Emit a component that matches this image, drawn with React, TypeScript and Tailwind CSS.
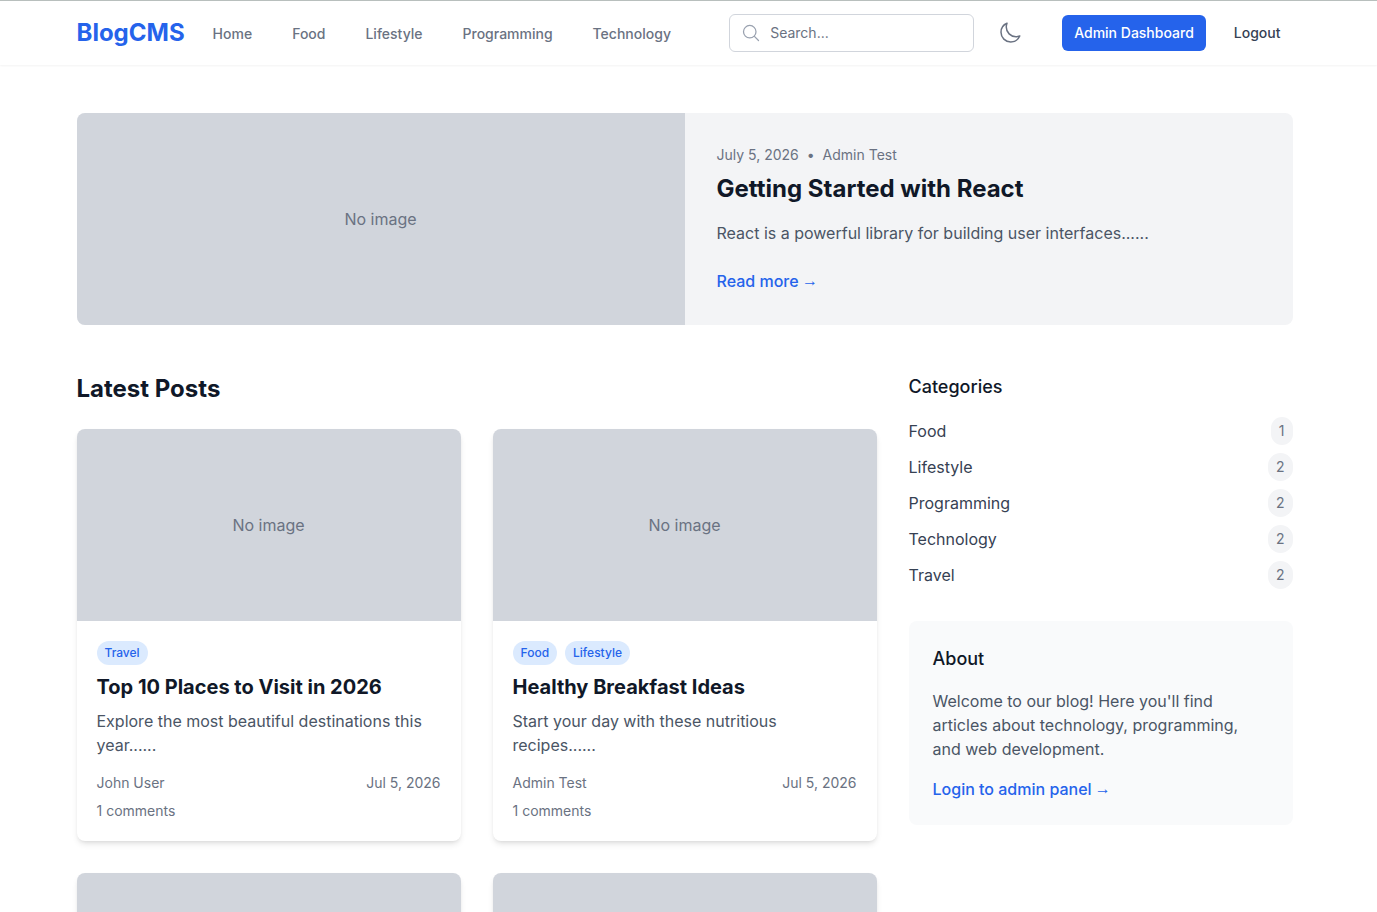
import { HiOutlineMagnifyingGlass, HiOutlineMoon } from 'react-icons/hi2'

interface Post {
  id: number
  title: string
  excerpt: string
  author: string
  date: string
  comments: number
  categories: string[]
}

const NAV_LINKS = ['Home', 'Food', 'Lifestyle', 'Programming', 'Technology']

const CATEGORIES = [
  { name: 'Food', count: 1 },
  { name: 'Lifestyle', count: 2 },
  { name: 'Programming', count: 2 },
  { name: 'Technology', count: 2 },
  { name: 'Travel', count: 2 },
]

const POSTS: Post[] = [
  {
    id: 1,
    title: 'Top 10 Places to Visit in 2026',
    excerpt: 'Explore the most beautiful destinations this year...',
    author: 'John User',
    date: 'Jul 5, 2026',
    comments: 1,
    categories: ['Travel'],
  },
  {
    id: 2,
    title: 'Healthy Breakfast Ideas',
    excerpt: 'Start your day with these nutritious recipes...',
    author: 'Admin Test',
    date: 'Jul 5, 2026',
    comments: 1,
    categories: ['Food', 'Lifestyle'],
  },
]

function Arrow() {
  return <span className="-ml-px align-[1px] font-['Liberation_Sans',sans-serif] text-base font-normal leading-none">→</span>
}

function Header() {
  return (
    <header className="relative border-t border-[#b8bfbd] bg-white pr-2 shadow-[0_1px_2px_0_rgb(0_0_0/0.05)]">
      <div className="mx-auto flex h-16 max-w-7xl items-center justify-between px-8">
        <div className="flex h-full items-center">
          <a href="#" className="text-2xl font-bold text-[#2563eb]">BlogCMS</a>
          <nav className="ml-6 flex h-full gap-8">
            {NAV_LINKS.map((link) => (
              <a
                key={link}
                href="#"
                className="inline-flex items-center border-b-2 border-transparent px-1 pt-1 text-sm font-medium text-gray-500 hover:text-gray-700"
              >
                {link}
              </a>
            ))}
          </nav>
        </div>

        <div className="flex items-center">
          <div className="relative w-[245px]">
            <HiOutlineMagnifyingGlass className="absolute left-3 top-[9px] h-5 w-5 text-gray-400" />
            <input
              type="text"
              placeholder="Search..."
              className="block w-full rounded-md border border-gray-300 bg-white py-2 pl-10 pr-3 text-sm leading-5 placeholder:text-gray-500"
            />
          </div>
          <button className="ml-4 rounded-full p-2 text-gray-500">
            <HiOutlineMoon className="h-6 w-6" />
          </button>
          <a href="#" className="ml-8 rounded-md bg-[#2563eb] px-3 py-2 text-sm font-medium text-white">
            Admin Dashboard
          </a>
          <button className="ml-4 px-3 py-2 text-sm font-medium text-gray-700">Logout</button>
        </div>
      </div>
    </header>
  )
}

function Hero() {
  return (
    <section className="mb-12 grid grid-cols-2 overflow-hidden rounded-lg bg-gray-100">
      <div className="flex items-center justify-center bg-gray-300">
        <span className="text-gray-500">No image</span>
      </div>
      <div className="p-8">
        <div className="mb-2 flex items-center text-sm text-gray-500">
          <span>July 5, 2026</span>
          <span className="mx-2">•</span>
          <span>Admin Test</span>
        </div>
        <h2 className="mb-4 text-2xl font-bold text-gray-900">Getting Started with React</h2>
        <p className="mb-6 text-gray-600">React is a powerful library for building user interfaces......</p>
        <a href="#" className="block font-medium text-[#2563eb]">Read more <Arrow /></a>
      </div>
    </section>
  )
}

function PostCard({ post }: { post: Post }) {
  return (
    <article className="overflow-hidden rounded-lg bg-white shadow-md">
      <div className="flex h-48 items-center justify-center bg-gray-300">
        <span className="text-gray-500">No image</span>
      </div>
      <div className="p-5">
        <div className="mb-2 flex gap-2">
          {post.categories.map((name) => (
            <span key={name} className="rounded-full bg-blue-100 px-2 py-1 text-xs font-medium text-[#2563eb]">
              {name}
            </span>
          ))}
        </div>
        <h3 className="mb-2 text-xl font-bold text-gray-900">{post.title}</h3>
        <p className="mb-4 text-gray-600">{`${post.excerpt}...`}</p>
        <div className="flex items-center justify-between text-sm text-gray-500">
          <span>{post.author}</span>
          <span>{post.date}</span>
        </div>
        <div className="mt-2 text-sm text-gray-500">{`${post.comments} comments`}</div>
      </div>
    </article>
  )
}

function Sidebar() {
  return (
    <aside>
      <h3 className="mb-4 text-lg font-medium text-gray-900">Categories</h3>
      <ul className="space-y-2">
        {CATEGORIES.map((category) => (
          <li key={category.name} className="flex items-center justify-between">
            <a href="#" className="text-gray-700">{category.name}</a>
            <span className="rounded-full bg-gray-100 px-2 py-1 text-sm text-gray-500">{category.count}</span>
          </li>
        ))}
      </ul>

      <div className="mt-8 rounded-lg bg-gray-50 p-6">
        <h3 className="mb-4 text-lg font-medium text-gray-900">About</h3>
        <p className="mb-4 text-gray-600">
          Welcome to our blog! Here you'll find articles about technology, programming, and web development.
        </p>
        <a href="#" className="block font-medium text-[#2563eb]">Login to admin panel <Arrow /></a>
      </div>
    </aside>
  )
}

export default function App() {
  return (
    <div className="h-screen overflow-hidden bg-white font-['Inter',sans-serif]">
      <Header />
      <div className="pr-2">
        <main className="mx-auto max-w-7xl px-8 py-12">
          <Hero />
          <div className="grid grid-cols-3 gap-8">
            <div className="col-span-2">
              <h2 className="mb-6 text-2xl font-bold text-gray-900">Latest Posts</h2>
              <div className="grid grid-cols-2 gap-8">
                {POSTS.map((post) => (
                  <PostCard key={post.id} post={post} />
                ))}
                {/* next row, cut off by the fold */}
                <div className="h-48 rounded-t-lg bg-gray-300 shadow-md" />
                <div className="h-48 rounded-t-lg bg-gray-300 shadow-md" />
              </div>
            </div>
            <Sidebar />
          </div>
        </main>
      </div>
    </div>
  )
}
